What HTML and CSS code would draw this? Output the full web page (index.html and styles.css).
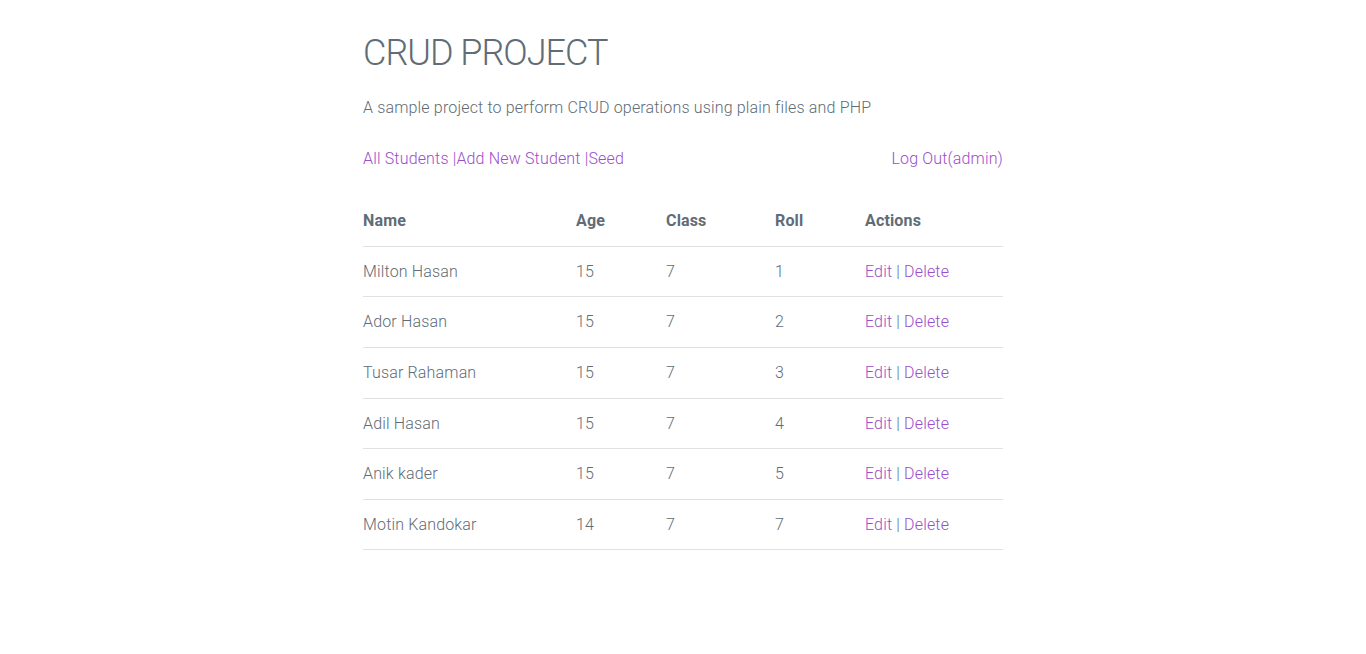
FILE: index.html
```html
<!DOCTYPE html>
<html lang="en">
<head>
<meta charset="utf-8">
<title>CRUD PROJECT</title>
<link rel="stylesheet" href="styles.css">
</head>
<body>
<div class="container">
  <div class="column">
    <h2 class="title">CRUD PROJECT</h2>
    <p class="lead">A sample project to perform CRUD operations using plain files and PHP</p>
    <div class="nav">
      <div class="nav-left"><a href="#">All Students |</a><a href="#">Add New Student |</a><a href="#">Seed</a></div>
      <a href="#">Log Out(admin)</a>
    </div>
    <table class="students">
      <colgroup>
        <col class="c-name"><col class="c-age"><col class="c-class"><col class="c-roll"><col class="c-actions">
      </colgroup>
      <thead>
        <tr><th>Name</th><th>Age</th><th>Class</th><th>Roll</th><th>Actions</th></tr>
      </thead>
      <tbody>
        <tr><td>Milton Hasan</td><td>15</td><td>7</td><td>1</td><td><a href="#">Edit</a> | <a href="#">Delete</a></td></tr>
        <tr><td>Ador Hasan</td><td>15</td><td>7</td><td>2</td><td><a href="#">Edit</a> | <a href="#">Delete</a></td></tr>
        <tr><td>Tusar Rahaman</td><td>15</td><td>7</td><td>3</td><td><a href="#">Edit</a> | <a href="#">Delete</a></td></tr>
        <tr><td>Adil Hasan</td><td>15</td><td>7</td><td>4</td><td><a href="#">Edit</a> | <a href="#">Delete</a></td></tr>
        <tr><td>Anik kader</td><td>15</td><td>7</td><td>5</td><td><a href="#">Edit</a> | <a href="#">Delete</a></td></tr>
        <tr><td>Motin Kandokar</td><td>14</td><td>7</td><td>7</td><td><a href="#">Edit</a> | <a href="#">Delete</a></td></tr>
      </tbody>
    </table>
  </div>
</div>
</body>
</html>
```

FILE: styles.css
```css
* { box-sizing: border-box; }
html, body { margin: 0; padding: 0; background: #fff; }
body {
  font-family: Roboto, "Helvetica Neue", Helvetica, Arial, sans-serif;
  font-size: 16px;
  font-weight: 300;
  letter-spacing: .01em;
  line-height: 1.6;
  color: #606c76;
}
a { color: #9b4dca; text-decoration: none; }
.container { display: flex; justify-content: center; padding-top: 31px; }
.column { width: 640px; }
.title {
  font-size: 36px;
  font-weight: 300;
  line-height: 1.25;
  letter-spacing: -1px;
  margin: 0 0 19px;
}
.lead { margin: 0 0 25px; }
.nav { display: flex; justify-content: space-between; margin-bottom: 25px; }
.students { width: 100%; border-spacing: 0; table-layout: fixed; }
.c-name { width: 198px; }
.c-age { width: 90px; }
.c-class { width: 109px; }
.c-roll { width: 90px; }
.c-actions { width: 153px; }
.students th, .students td {
  text-align: left;
  padding: 12px 15px;
  border-bottom: 1px solid #e1e1e1;
}
.students th { font-weight: 700; }
.students th:first-child, .students td:first-child { padding-left: 0; }
.students th:last-child, .students td:last-child { padding-right: 0; }
```
